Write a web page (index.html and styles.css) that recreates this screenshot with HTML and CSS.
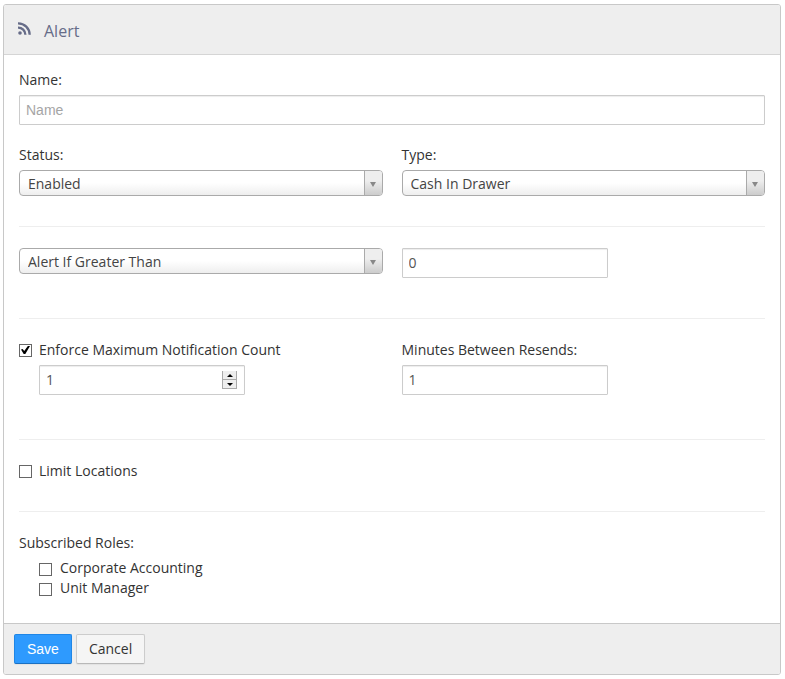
FILE: index.html
```html
<!DOCTYPE html>
<html lang="en">

<head>
    <meta charset="UTF-8">
    <meta name="viewport" content="width=device-width, initial-scale=1.0">
    <title>Alert</title>
    <link rel="stylesheet" href="styles.css">
</head>

<body>
    <form class="panel" onsubmit="return false">
        <header class="panel-header">
            <svg class="panel-icon" viewBox="0 0 13 13" width="13" height="13" aria-hidden="true">
                <circle cx="2" cy="11" r="1.8" />
                <path d="M0 5.6a7.2 7.2 0 0 1 7.4 7.2M0 1.3a11.5 11.5 0 0 1 11.7 11.5" />
            </svg>
            <h1 class="panel-title">Alert</h1>
        </header>

        <div class="panel-body">
            <div class="section">
                <div class="field">
                    <label for="name">Name:</label>
                    <input class="input" type="text" id="name" placeholder="Name">
                </div>
                <div class="row">
                    <div class="field">
                        <label for="status">Status:</label>
                        <div class="select">
                            <select id="status">
                                <option>Enabled</option>
                                <option>Disabled</option>
                            </select>
                            <span class="select-arrow"></span>
                        </div>
                    </div>
                    <div class="field">
                        <label for="type">Type:</label>
                        <div class="select">
                            <select id="type">
                                <option>Cash In Drawer</option>
                            </select>
                            <span class="select-arrow"></span>
                        </div>
                    </div>
                </div>
            </div>

            <div class="section section-condition">
                <div class="row">
                    <div class="select">
                        <select id="condition" aria-label="Condition">
                            <option>Alert If Greater Than</option>
                            <option>Alert If Less Than</option>
                        </select>
                        <span class="select-arrow"></span>
                    </div>
                    <input class="input input-short" type="text" id="amount" aria-label="Amount" value="0">
                </div>
            </div>

            <div class="section section-resend">
                <div class="row">
                    <div class="field">
                        <div class="check">
                            <input type="checkbox" id="enforce" checked>
                            <label for="enforce">Enforce Maximum Notification Count</label>
                        </div>
                        <div class="spinner">
                            <input class="input" type="number" id="maxCount" aria-label="Maximum notification count" value="1">
                            <div class="spinner-buttons">
                                <button type="button" class="spin-up" aria-label="Increase" onclick="maxCount.stepUp()"></button>
                                <button type="button" class="spin-down" aria-label="Decrease" onclick="maxCount.stepDown()"></button>
                            </div>
                        </div>
                    </div>
                    <div class="field">
                        <label for="minutes">Minutes Between Resends:</label>
                        <input class="input input-short" type="text" id="minutes" value="1">
                    </div>
                </div>
            </div>

            <div class="section">
                <div class="check">
                    <input type="checkbox" id="limit">
                    <label for="limit">Limit Locations</label>
                </div>
            </div>

            <div class="section">
                <fieldset>
                    <legend>Subscribed Roles:</legend>
                    <div class="roles">
                        <div class="check">
                            <input type="checkbox" id="accounting">
                            <label for="accounting">Corporate Accounting</label>
                        </div>
                        <div class="check">
                            <input type="checkbox" id="manager">
                            <label for="manager">Unit Manager</label>
                        </div>
                    </div>
                </fieldset>
            </div>
        </div>

        <footer class="panel-footer">
            <button type="submit" class="button button-primary">Save</button>
            <button type="button" class="button">Cancel</button>
        </footer>
    </form>
</body>

</html>
```

FILE: styles.css
```css
* {
    box-sizing: border-box;
}

body {
    margin: 4px 4px 4px 3px;
    background-color: #fff;
    color: #333;
    font-family: "Open Sans", sans-serif;
    font-size: 14px;
    line-height: 20px;
}

input,
select,
button {
    margin: 0;
    font: inherit;
}

.panel {
    border: 1px solid #c8c8c8;
    border-radius: 3px;
    overflow: hidden;
}

/* header */
.panel-header {
    display: flex;
    align-items: center;
    gap: 13px;
    padding: 14px;
    height: 50px;
    background-color: #eee;
    border-bottom: 1px solid #d5d5d5;
    color: #666c88;
}

.panel-icon {
    fill: currentColor;
    margin-bottom: 2px;
}

.panel-icon path {
    fill: none;
    stroke: currentColor;
    stroke-width: 2.3;
}

.panel-title {
    margin: 0;
    padding-top: 2px;
    font-size: 16px;
    font-weight: normal;
}

/* form */
.panel-body {
    padding: 15px 15px 25px;
}

.section {
    padding-bottom: 30px;
}

.section + .section {
    padding-top: 21px;
    border-top: 1px solid #eee;
}

.section:last-child {
    padding-bottom: 0;
}

.section-condition {
    padding-bottom: 40px;
}

.section-resend {
    padding-bottom: 44px;
}

.row {
    display: grid;
    grid-template-columns: 1fr 1fr;
    gap: 19px;
    align-items: start;
}

.field {
    display: flex;
    flex-direction: column;
    gap: 5px;
}

.field + .row {
    margin-top: 20px;
}

.input {
    width: 100%;
    height: 30px;
    padding: 3px 6px 5px;
    border: 1px solid #ccc;
    border-radius: 1px;
    background-color: #fff;
    box-shadow: inset 0 1px 1px rgba(0, 0, 0, 0.075);
    color: #555;
}

.input::placeholder {
    color: #a5a5a5;
    font-family: "Liberation Sans", Arial, sans-serif;
}

.input-short {
    width: 206px;
}

.select {
    position: relative;
}

.select select {
    display: block;
    appearance: none;
    width: 100%;
    height: 26px;
    padding: 2px 26px 0 8px;
    border: 1px solid #aaa;
    border-radius: 4px;
    background: linear-gradient(to top, #eee 0%, #fff 50%);
    color: #444;
}

.select-arrow {
    position: absolute;
    top: 1px;
    right: 1px;
    bottom: 1px;
    width: 18px;
    border-left: 1px solid #aaa;
    border-radius: 0 3px 3px 0;
    background: linear-gradient(to top, #ccc 0%, #eee 60%);
    pointer-events: none;
}

.select-arrow::after {
    content: "";
    position: absolute;
    top: 11px;
    left: 5px;
    border: 3px solid transparent;
    border-top: 5px solid #888;
    border-bottom: none;
}

.spinner {
    position: relative;
    width: 206px;
    margin-left: 20px;
}

.spinner input {
    appearance: textfield;
}

.spinner input::-webkit-inner-spin-button {
    appearance: none;
    margin: 0;
}

.spinner-buttons {
    position: absolute;
    top: 6px;
    right: 8px;
    width: 15px;
}

.spinner-buttons button {
    display: flex;
    align-items: center;
    justify-content: center;
    width: 100%;
    height: 9px;
    padding: 0;
    border: 1px solid #aaa;
    border-top: none;
    background-color: #eee;
}

.spinner-buttons button::after {
    content: "";
    border: 3px solid transparent;
}

.spinner-buttons .spin-up::after {
    border-top: none;
    border-bottom: 3px solid #000;
}

.spinner-buttons .spin-down::after {
    border-bottom: none;
    border-top: 3px solid #000;
}

.check {
    display: flex;
    align-items: center;
    gap: 7px;
}

.check input {
    appearance: none;
    width: 13px;
    height: 13px;
    border: 1px solid #666;
    background-color: #fff;
}

.check input:checked::after {
    content: "";
    display: block;
    width: 9px;
    height: 9px;
    margin: 1px;
    background-color: #000;
    clip-path: polygon(0 45%, 18% 38%, 36% 62%, 80% 0, 100% 6%, 48% 95%, 30% 95%);
}

fieldset {
    margin: 0;
    padding: 0;
    border: none;
}

legend {
    padding: 0;
}

.roles {
    padding: 5px 0 0 20px;
}

.roles .check {
    gap: 8px;
}

.roles .check input {
    margin-top: 3px;
}

/* footer */
.panel-footer {
    display: flex;
    gap: 4px;
    padding: 10px;
    border-top: 1px solid #c8c8c8;
    background-color: #eee;
}

.button {
    height: 30px;
    padding: 0 12px;
    border: 1px solid #ccc;
    border-bottom-color: #b8b8b8;
    border-radius: 2px;
    background-color: #f5f5f5;
    box-shadow: 0 1px 1px rgba(0, 0, 0, 0.05);
    color: #333;
    cursor: pointer;
}

.button-primary {
    border-color: #1f86e6;
    border-bottom-color: #1a70c2;
    background-color: #2e9afe;
    color: #fff;
    font-family: "Liberation Sans", Arial, sans-serif;
}
```
